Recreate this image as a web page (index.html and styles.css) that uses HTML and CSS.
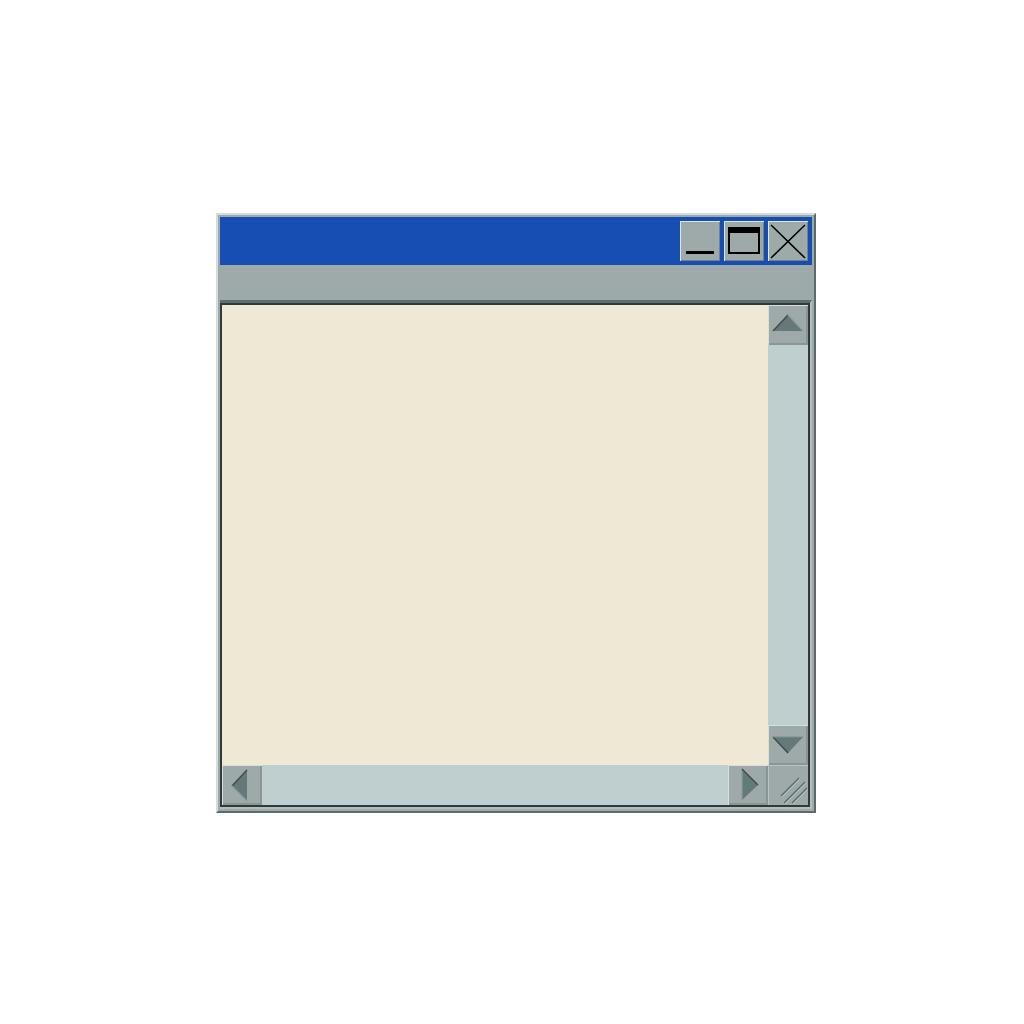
FILE: index.html
```html
<!DOCTYPE html>
<html>
<head>
<meta charset="utf-8">
<link rel="stylesheet" href="styles.css">
</head>
<body>
<div class="window">
  <div class="titlebar">
    <div class="tbtn">
      <svg width="40" height="40" viewBox="0 0 40 40"><rect x="6" y="30" width="28" height="3" fill="#000"/></svg>
    </div>
    <div class="tbtn">
      <svg width="40" height="40" viewBox="0 0 40 40"><rect x="5" y="7" width="30" height="25" fill="none" stroke="#000" stroke-width="2"/><rect x="4" y="6" width="32" height="6" fill="#000"/></svg>
    </div>
    <div class="tbtn">
      <svg width="40" height="40" viewBox="0 0 40 40"><path d="M3 4 L37 37 M37 4 L3 37" stroke="#000" stroke-width="1.6" fill="none"/></svg>
    </div>
  </div>
  <div class="menubar"></div>
  <div class="client">
    <div class="well">
      <div class="content"></div>
      <div class="vscroll">
        <div class="sbtn">
          <svg width="40" height="40" viewBox="0 0 40 40"><polygon points="20,10 35,26 5,26" fill="#66797a"/><polyline points="5,26 20,10" stroke="#3c4c4c" stroke-width="1.5" fill="none"/><polyline points="20,10 35,26" stroke="#8c9b9b" stroke-width="1.2" fill="none"/></svg>
        </div>
        <div class="trough"></div>
        <div class="sbtn">
          <svg width="40" height="40" viewBox="0 0 40 40"><polygon points="5,12 35,12 20,28" fill="#66797a"/><polyline points="5,12 20,28" stroke="#3c4c4c" stroke-width="1.5" fill="none"/><polyline points="5,12 35,12" stroke="#7d8d8d" stroke-width="1" fill="none"/></svg>
        </div>
      </div>
      <div class="hscroll">
        <div class="sbtn">
          <svg width="40" height="40" viewBox="0 0 40 40"><polygon points="10,21 25,5 25,36" fill="#66797a"/><polyline points="25,5 10,21" stroke="#3c4c4c" stroke-width="1.5" fill="none"/><polyline points="10,21 25,36" stroke="#8c9b9b" stroke-width="1.2" fill="none"/></svg>
        </div>
        <div class="trough"></div>
        <div class="sbtn">
          <svg width="40" height="40" viewBox="0 0 40 40"><polygon points="14,4 30,20 14,35" fill="#66797a"/><polyline points="14,4 14,35" stroke="#8c9b9b" stroke-width="1.2" fill="none"/><polyline points="14,4 30,20" stroke="#3c4c4c" stroke-width="1.5" fill="none"/></svg>
        </div>
      </div>
      <div class="corner">
        <svg width="40" height="40" viewBox="0 0 40 40">
          <path d="M13 31 L31 13 M16 38 L37 17 M24 38 L39 23" stroke="#5b6b6b" stroke-width="1.3" fill="none"/>
          <path d="M14 32 L32 14 M17 39 L38 18 M25 39 L40 24" stroke="#b9c4c4" stroke-width="1" fill="none"/>
        </svg>
      </div>
    </div>
  </div>
</div>
</body>
</html>
```
FILE: styles.css
```css
html, body {
  margin: 0;
  padding: 0;
  background: #ffffff;
}
body {
  padding: 213px 0 0 216px;
}
.window {
  width: 600px;
  height: 600px;
  box-sizing: border-box;
  border-style: solid;
  border-width: 2px;
  border-color: #d4dcdc #5b6a6a #5b6a6a #d4dcdc;
  padding: 2px;
  background: #9eaaa9;
  display: flex;
  flex-direction: column;
}
.titlebar {
  height: 48px;
  flex: none;
  box-sizing: border-box;
  background: #164eb4;
  display: flex;
  justify-content: flex-end;
  align-items: center;
  gap: 4px;
  padding: 0 4px;
}
.tbtn {
  width: 40px;
  height: 40px;
  background: #9eaaa9;
  box-shadow: inset 1px 1px #e1e7e7, inset -1px -1px #74817f;
}
.tbtn svg, .sbtn svg, .corner svg {
  display: block;
}
.menubar {
  height: 35px;
  flex: none;
  background: #9eaaa9;
}
.client {
  flex: 1;
  display: flex;
  border-top: 3px solid #5e6d6d;
  border-right: 2px solid #b3bebe;
  border-bottom: 2px solid #b3bebe;
}
.well {
  flex: 1;
  border: 2px solid #333838;
  display: grid;
  grid-template-columns: 1fr 40px;
  grid-template-rows: 1fr 40px;
}
.content {
  background: #eee8d5;
}
.vscroll {
  display: flex;
  flex-direction: column;
  background: #bfcfcf;
}
.hscroll {
  display: flex;
  flex-direction: row;
  background: #bfcfcf;
}
.trough {
  flex: 1;
  background: #bfcfcf;
}
.sbtn {
  width: 40px;
  height: 40px;
  flex: none;
  background: #9eaaa9;
  box-shadow: inset 1px 1px #d7dfdf, inset -2px -2px #8a9696;
}
.corner {
  background: #9eaaa9;
  box-shadow: inset 1px 1px #b9c4c4;
}
```
